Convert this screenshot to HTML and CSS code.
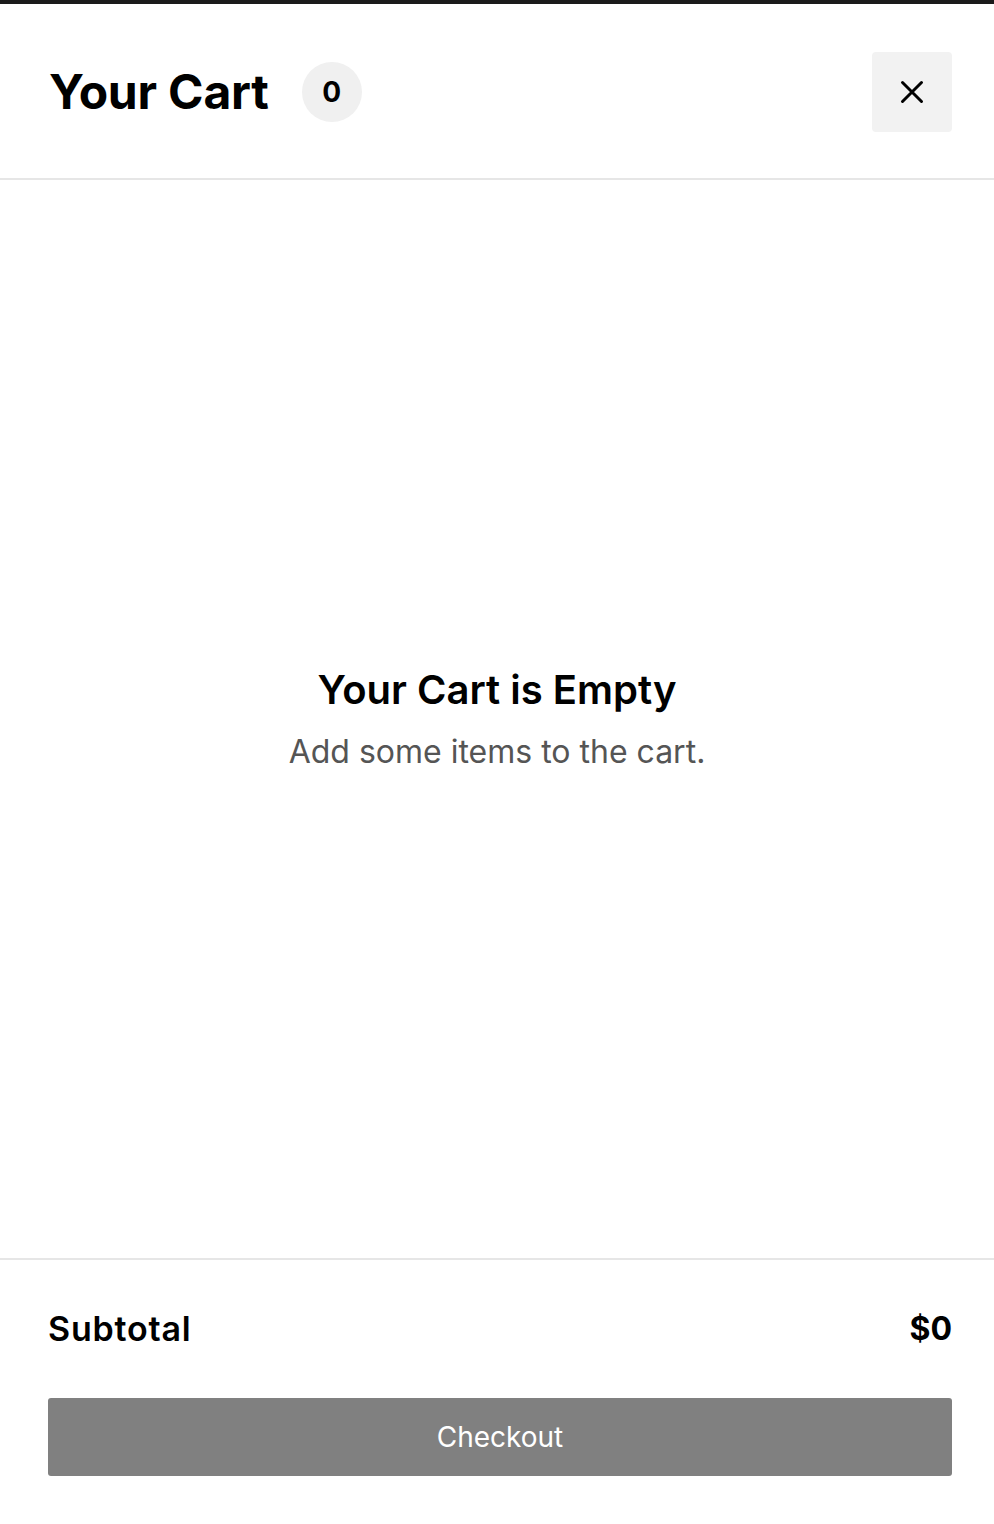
FILE: index.html
```html
<!DOCTYPE html>
<html lang="en">
<head>
<meta charset="utf-8">
<title>Your Cart</title>
<link rel="stylesheet" href="styles.css">
</head>
<body>
<div class="drawer">
  <header class="cart-header">
    <div class="title-wrap">
      <h1 class="cart-title">Your Cart</h1>
      <span class="count-badge">0</span>
    </div>
    <button class="close-btn" aria-label="Close cart">
      <svg width="24" height="24" viewBox="0 0 24 24" fill="none" stroke="#000" stroke-width="3" stroke-linecap="round"><path d="M2.5 2.5L21.5 21.5M21.5 2.5L2.5 21.5"/></svg>
    </button>
  </header>
  <main class="cart-body">
    <h2 class="empty-title">Your Cart is Empty</h2>
    <p class="empty-text">Add some items to the cart.</p>
  </main>
  <footer class="cart-footer">
    <div class="subtotal-row">
      <span class="subtotal-label">Subtotal</span>
      <span class="subtotal-value">$0</span>
    </div>
    <button class="checkout-btn">Checkout</button>
  </footer>
</div>
</body>
</html>
```
FILE: styles.css
```css
* { box-sizing: border-box; }
html, body { margin: 0; padding: 0; }
body {
  font-family: Inter, "Noto Sans", sans-serif;
  color: #000;
  background: #fff;
}
.drawer {
  height: 1524px;
  display: flex;
  flex-direction: column;
  border-top: 4px solid #1b1b1b;
}
.cart-header {
  display: flex;
  align-items: center;
  justify-content: space-between;
  padding: 48px 42px 46px 48px;
  border-bottom: 2px solid #e6e6e6;
}
.title-wrap {
  display: flex;
  align-items: center;
  gap: 33px;
}
.cart-title {
  margin: 0 0 0 1px;
  font-size: 48px;
  font-weight: 700;
  line-height: 1;
  letter-spacing: -0.2px;
}
.count-badge {
  width: 60px;
  height: 60px;
  border-radius: 50%;
  background: #f0f0f0;
  display: flex;
  align-items: center;
  justify-content: center;
  font-size: 28px;
  font-weight: 700;
}
.close-btn {
  width: 80px;
  height: 80px;
  border: none;
  border-radius: 4px;
  background: #f2f2f2;
  display: flex;
  align-items: center;
  justify-content: center;
  padding: 0;
}
.cart-body {
  flex: 1;
  display: flex;
  flex-direction: column;
  align-items: center;
  justify-content: center;
  text-align: center;
}
.empty-title {
  margin: 0;
  font-size: 40px;
  font-weight: 600;
  line-height: 1.2;
}
.empty-text {
  margin: 18px 0 0;
  font-size: 32px;
  color: #555;
  line-height: 1.25;
}
.cart-footer {
  border-top: 2px solid #e6e6e6;
  padding: 48px 42px 48px 48px;
  display: flex;
  flex-direction: column;
  gap: 48px;
}
.subtotal-row {
  display: flex;
  justify-content: space-between;
  align-items: center;
  font-size: 34px;
  line-height: 42px;
}
.subtotal-label { font-weight: 600; letter-spacing: 0.8px; }
.subtotal-value { font-weight: 700; font-size: 32px; }
.checkout-btn {
  height: 78px;
  border: none;
  border-radius: 3px;
  background: #808080;
  color: #fff;
  font-family: inherit;
  font-size: 28px;
}
```
